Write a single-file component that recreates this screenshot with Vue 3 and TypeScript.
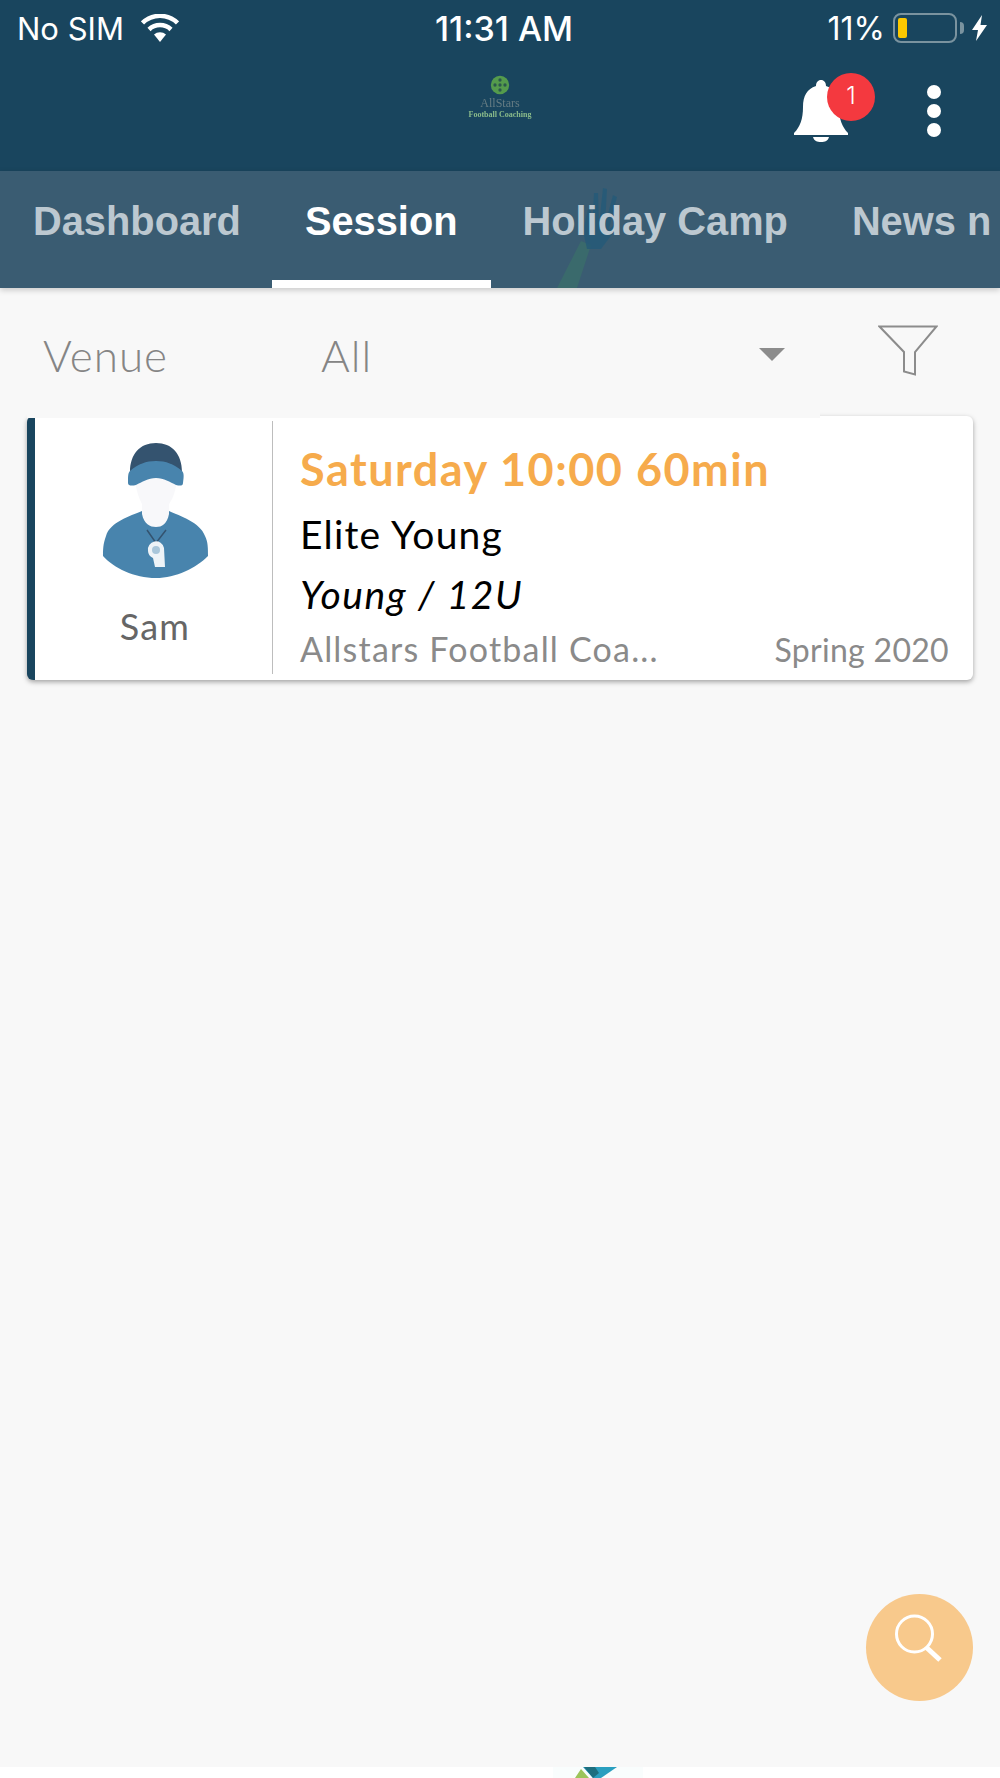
<template>
  <div class="page">
    <header class="top">
      <div class="status">
        <div class="status-left">
          <span>No SIM</span>
          <svg class="wifi" viewBox="0 0 38 28" width="38" height="28">
            <path d="M19 28 L13 20.500 A9 9 0 0 1 25 20.500 Z" fill="#fff" />
            <path d="M8 15.500 A16 16 0 0 1 30 15.500" fill="none" stroke="#fff" stroke-width="4.500" />
            <path d="M1.500 9 A25 25 0 0 1 36.500 9" fill="none" stroke="#fff" stroke-width="4.500" />
          </svg>
        </div>
        <div class="status-time">11:31 AM</div>
        <div class="status-right">
          <span>11%</span>
          <div class="battery"><div class="battery-fill"></div></div>
          <div class="battery-nub"></div>
          <svg class="bolt" viewBox="0 0 15 26" width="15" height="26">
            <path d="M10 0 L0 15 H6 L4 26 L15 10 H8.500 Z" fill="#fff" />
          </svg>
        </div>
      </div>
      <div class="toolbar">
        <div class="logo">
          <svg viewBox="0 0 24 24" width="20" height="20">
            <circle cx="12" cy="12" r="11" fill="#58a04c" />
            <circle cx="12" cy="6" r="2" fill="#2c5a4c" />
            <circle cx="6" cy="12" r="2" fill="#2c5a4c" />
            <circle cx="18" cy="12" r="2" fill="#2c5a4c" />
            <circle cx="12" cy="18" r="2" fill="#2c5a4c" />
            <circle cx="12" cy="12" r="2" fill="#2c5a4c" />
          </svg>
          <span class="logo-name">AllStars</span>
          <span class="logo-sub">Football Coaching</span>
        </div>
        <div class="bell-wrap">
          <svg viewBox="0 0 54 62" width="54" height="62">
            <path d="M27 0 C30 0 32 2.500 32 6 C41 9 45 16 45 27 C45 39 48 47 54 53 L54 55 L0 55 L0 53 C6 47 9 39 9 27 C9 16 13 9 22 6 C22 2.500 24 0 27 0 Z" fill="#fff" />
            <path d="M19 57 H35 C34 61 31 62 27 62 C23 62 20 61 19 57 Z" fill="#fff" />
          </svg>
          <span class="badge">1</span>
        </div>
        <div class="more">
          <i></i><i></i><i></i>
        </div>
      </div>
      <nav class="tabs">
        <svg class="hand" viewBox="0 0 100 117" width="100" height="117">
          <path d="M6 117 L30 70 L40 74 L26 117 Z" fill="#3a6a6c" />
          <path d="M36 78 L32 60 L37 38 L40 40 L41 58 L43 22 L47 22 L48 54 L52 17 L56 18 L54 54 L62 24 L66 26 L58 58 L66 52 L65 58 L50 78 Z" fill="#245a78" opacity="0.8" />
        </svg>
        <a v-for="tab in tabs" :key="tab" class="tab" :class="{ active: tab === 'Session' }">{{ tab }}</a>
      </nav>
    </header>

    <main class="content">
      <div class="filter">
        <span class="filter-label">Venue</span>
        <span class="filter-value">All</span>
        <span class="caret"></span>
        <svg class="funnel" viewBox="0 0 60 52" width="60" height="52">
          <path d="M1.500 1.500 H58.500 L37 27 V49.500 L26 46.500 V27 Z" fill="none" stroke="#8c8c8c" stroke-width="2" />
        </svg>
      </div>

      <article class="card">
        <div class="coach">
          <svg viewBox="0 0 110 140" width="110" height="140">
            <path d="M42 71 C30 76 10 82 6 96 C3 104 3 110 3 116 C14 128 34 138 56 138 C76 138 96 128 108 116 C108 108 108 102 105 96 C100 82 80 76 69 71 Z" fill="#4884ad" />
            <path d="M35 38 C36 52 40 60 42 64 L42 74 C44 84 50 87 56 87 C62 87 67 84 69 74 L69 64 C72 60 76 52 77 38 Z" fill="#f8f8fa" />
            <path d="M30 32 C30 14 40 3 56 3 C72 3 82 14 82 32 L70 24 L42 24 Z" fill="#34536f" />
            <path d="M28 43 C28 36 28 33 30 31 C38 24 46 21 56 21 C66 21 74 24 82 31 C84 33 84 36 83 43 C83 46 80 46 76 45 C70 42 64 38 56 38 C48 38 42 42 36 45 C32 46 28 46 28 43 Z" fill="#4884ad" />
            <path d="M47 90 L56 103 L66 90" fill="none" stroke="#34536f" stroke-width="1.500" />
            <path d="M48 111 A8 8 0 0 1 64 108 L65 127 L55 127 L53 118 A8 8 0 0 1 48 111 Z" fill="#eef3f7" />
            <circle cx="56" cy="110" r="4" fill="#a9c6da" />
          </svg>
          <span class="coach-name">Sam</span>
        </div>
        <div class="details">
          <div class="when">Saturday 10:00 60min</div>
          <div class="squad">Elite Young</div>
          <div class="group">Young / 12U</div>
          <div class="foot">
            <span class="org">Allstars Football Coa...</span>
            <span class="term">Spring 2020</span>
          </div>
        </div>
      </article>

      <button class="fab" type="button">
        <svg viewBox="0 0 107 107" width="107" height="107">
          <circle cx="48.500" cy="40" r="18" fill="none" stroke="#fff" stroke-width="3" />
          <path d="M61 54 L74 66" stroke="#fff" stroke-width="5" fill="none" />
        </svg>
      </button>
    </main>

    <footer class="bottom">
      <svg viewBox="0 0 90 11" width="90" height="11">
        <path d="M0 0 H90 V11 H0 Z" fill="#f9fdfd" />
        <path d="M30 0 H64 L48 11 H40 Z" fill="#2a9fbf" />
        <path d="M22 11 L28 2 L36 11 Z" fill="#9cc45a" />
        <path d="M31 0 H42 L46 6 L40 11 Z" fill="#1d6f7f" />
      </svg>
    </footer>
  </div>
</template>

<script setup lang="ts">
const tabs: string[] = ['Dashboard', 'Session', 'Holiday Camp', 'News n']
</script>

<style>
html,
body {
  margin: 0;
  background: #f8f8f8;
}
</style>

<style scoped>
.page {
  width: 1000px;
  height: 1778px;
  display: flex;
  flex-direction: column;
  overflow: hidden;
  background: #f8f8f8;
  font-family: Lato, "Open Sans", sans-serif;
}

.top {
  background: #19455e;
  flex: none;
}

.status {
  height: 56px;
  display: grid;
  grid-template-columns: 1fr auto 1fr;
  align-items: center;
  padding: 0 13px 0 17px;
  color: #fff;
  font-family: Inter, Roboto, sans-serif;
  font-size: 31px;
}

.status-left {
  display: flex;
  align-items: center;
  gap: 17px;
}

.status-time {
  padding-left: 4px;
  font-size: 34px;
  font-weight: 500;
}

.status-right {
  display: flex;
  align-items: center;
  justify-content: flex-end;
}

.status-right span {
  margin-right: 8px;
  font-size: 32px;
}

.battery {
  width: 64px;
  height: 30px;
  box-sizing: border-box;
  border: 2px solid #7a939f;
  border-radius: 8px;
  padding: 3px;
}

.battery-fill {
  width: 9px;
  height: 100%;
  background: #fcc800;
  border-radius: 2px;
}

.battery-nub {
  width: 4px;
  height: 12px;
  margin-left: 3px;
  background: #7a939f;
  border-radius: 0 4px 4px 0;
}

.bolt {
  margin-left: 8px;
}

.toolbar {
  height: 115px;
  position: relative;
  display: flex;
  align-items: flex-start;
  justify-content: flex-end;
}

.logo {
  position: absolute;
  left: 450px;
  top: 19px;
  width: 100px;
  display: flex;
  flex-direction: column;
  align-items: center;
  font-family: "Liberation Serif", serif;
  filter: blur(0.5px);
  opacity: 0.95;
}

.logo-name {
  font-size: 12px;
  line-height: 11px;
  margin-top: 3px;
  color: #6a7f85;
}

.logo-sub {
  font-size: 8px;
  line-height: 11px;
  font-weight: 700;
  color: #8fc08c;
}

.bell-wrap {
  position: relative;
  width: 54px;
  height: 62px;
  margin-top: 24px;
  margin-right: 79px;
}

.badge {
  position: absolute;
  left: 33px;
  top: -7px;
  width: 48px;
  height: 48px;
  border-radius: 50%;
  background: #f4393f;
  color: #fff;
  font-size: 24px;
  font-family: Inter, sans-serif;
  font-weight: 300;
  line-height: 46px;
  text-align: center;
}

.more {
  display: flex;
  flex-direction: column;
  gap: 5px;
  margin-top: 29px;
  margin-right: 59px;
}

.more i {
  display: block;
  width: 14px;
  height: 14px;
  border-radius: 50%;
  background: #fff;
}

.tabs {
  position: relative;
  height: 117px;
  display: flex;
  padding-left: 1px;
  overflow: hidden;
  background: #3a5c72;
  box-shadow: 0 2px 6px rgba(0, 0, 0, 0.2);
}

.hand {
  position: absolute;
  left: 551px;
  top: 0;
}

.tab {
  position: relative;
  flex: none;
  padding: 28px 32px 0;
  height: 117px;
  box-sizing: border-box;
  color: #bcc8d0;
  font-family: "Liberation Sans", Arial, sans-serif;
  font-size: 39.800px;
  font-weight: 700;
  white-space: nowrap;
}

.tab.active {
  color: #fff;
  margin-left: -1px;
  padding: 28px 33px 0;
  border-bottom: 8px solid #fff;
}

.content {
  position: relative;
  flex: 1;
}

.filter {
  height: 128px;
  display: flex;
  align-items: center;
  color: #858585;
  font-size: 44px;
  font-weight: 300;
  letter-spacing: 1px;
  padding-top: 5px;
  box-sizing: border-box;
}

.filter-label {
  width: 278px;
  padding-left: 43px;
  box-sizing: border-box;
}

.filter-value {
  width: 438px;
  padding-left: 43px;
  box-sizing: border-box;
}

.caret {
  width: 0;
  height: 0;
  border-left: 13px solid transparent;
  border-right: 13px solid transparent;
  border-top: 13px solid #8c8c8c;
  margin-left: 43px;
}

.funnel {
  margin-left: 93px;
  margin-top: -7px;
}

.card {
  position: relative;
  margin: 0 27px;
  height: 264px;
  display: flex;
  background: #fff;
  border-left: 8px solid #19455e;
  border-radius: 6px;
  box-shadow: 0 2px 5px rgba(0, 0, 0, 0.35);
}

.card::before {
  content: "";
  position: absolute;
  left: -8px;
  top: -6px;
  width: 793px;
  height: 8px;
  background: #f8f8f8;
}

.coach {
  width: 238px;
  flex: none;
  margin: 5px 0 6px;
  padding-left: 3px;
  border-right: 1px solid #bdbdbd;
  display: flex;
  flex-direction: column;
  align-items: center;
  padding-top: 19px;
  box-sizing: border-box;
}

.coach-name {
  margin-top: 24px;
  color: #666;
  font-size: 36px;
  letter-spacing: 1.200px;
  line-height: 44px;
}

.details {
  flex: 1;
  min-width: 0;
  padding: 25px 24px 0 27px;
}

.when {
  color: #f6ab4c;
  font-size: 45px;
  font-weight: 700;
  letter-spacing: 1.500px;
  line-height: 56px;
}

.squad {
  color: #000;
  font-size: 39px;
  letter-spacing: 1.200px;
  line-height: 50px;
  margin-top: 12px;
}

.group {
  color: #000;
  font-size: 39px;
  font-style: italic;
  letter-spacing: 1.600px;
  line-height: 50px;
  margin-top: 10px;
}

.foot {
  display: flex;
  justify-content: space-between;
  align-items: baseline;
  color: #8a8a8a;
  font-size: 34px;
  letter-spacing: 1.200px;
  line-height: 44px;
  margin-top: 8px;
}

.term {
  font-size: 32px;
  letter-spacing: 0.300px;
}

.fab {
  position: absolute;
  right: 27px;
  bottom: 66px;
  width: 107px;
  height: 107px;
  padding: 0;
  border: 0;
  border-radius: 50%;
  background: #f8c98c;
  line-height: 0;
}

.bottom {
  flex: none;
  height: 11px;
  background: #fff;
  padding-left: 553px;
  line-height: 0;
}
</style>
